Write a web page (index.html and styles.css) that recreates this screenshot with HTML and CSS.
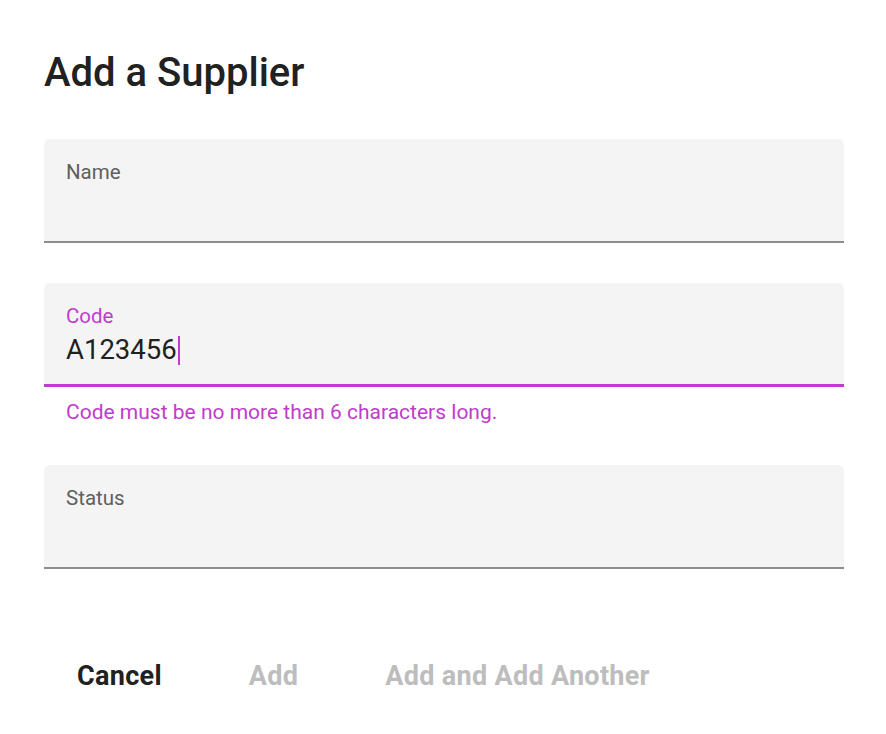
FILE: index.html
```html
<!DOCTYPE html>
<html lang="en">
<head>
  <meta charset="UTF-8" />
  <title>Add a Supplier</title>
  <link rel="stylesheet" href="styles.css">
</head>
<body>
  <main class="dialog">
    <h1 class="title">Add a Supplier</h1>

    <div class="field">
      <div class="box">
        <label class="label">Name</label>
        <div class="value"></div>
      </div>
    </div>

    <div class="field is-error">
      <div class="box">
        <label class="label">Code</label>
        <div class="value">A123456<span class="caret"></span></div>
      </div>
      <p class="helper">Code must be no more than 6 characters long.</p>
    </div>

    <div class="field">
      <div class="box">
        <label class="label">Status</label>
        <div class="value"></div>
      </div>
    </div>

    <div class="actions">
      <button class="btn">Cancel</button>
      <button class="btn" disabled>Add</button>
      <button class="btn" disabled>Add and Add Another</button>
    </div>
  </main>
</body>
</html>
```

FILE: styles.css
```css
/* ===== tokens ===== */
:root{ --accent:#c03ccc; --text:#212121; --muted:#5f5f5f; }

*{box-sizing:border-box;}
html,body{margin:0;}
body{background:#fff;color:var(--text);font-family:Roboto,'Noto Sans',sans-serif;}

.dialog{width:886px;padding:49px 42px 0 44px;}

.title{font-size:40px;font-weight:500;line-height:48px;margin:0 0 42px;letter-spacing:0;}

/* ===== text fields ===== */
.field{margin-bottom:40px;}
.box{
  height:104px;background:#f4f4f4;border-radius:6px 6px 0 0;
  border-bottom:2px solid #8c8c8c;padding:21px 22px 0;
}
.label{display:block;font-size:20.5px;line-height:24px;color:var(--muted);}
.value{font-size:27.5px;line-height:32px;margin-top:6px;color:var(--text);}

.is-error{margin-bottom:41px;}
.is-error .box{border-bottom:3px solid var(--accent);}
.is-error .label{color:var(--accent);}
.caret{display:inline-block;width:2px;height:29px;background:var(--accent);vertical-align:-6px;margin-left:1px;}
.helper{margin:13px 0 0 22px;font-size:21px;line-height:24px;color:var(--accent);}

/* ===== actions ===== */
.actions{display:flex;gap:39px;margin-top:85px;padding-left:9px;}
.btn{
  background:none;border:0;font-family:inherit;font-size:27px;line-height:28px;
  font-weight:700;letter-spacing:.3px;color:var(--text);padding:8px 24px;cursor:pointer;
}
.btn:disabled{color:#bdbdbd;cursor:default;}
```
